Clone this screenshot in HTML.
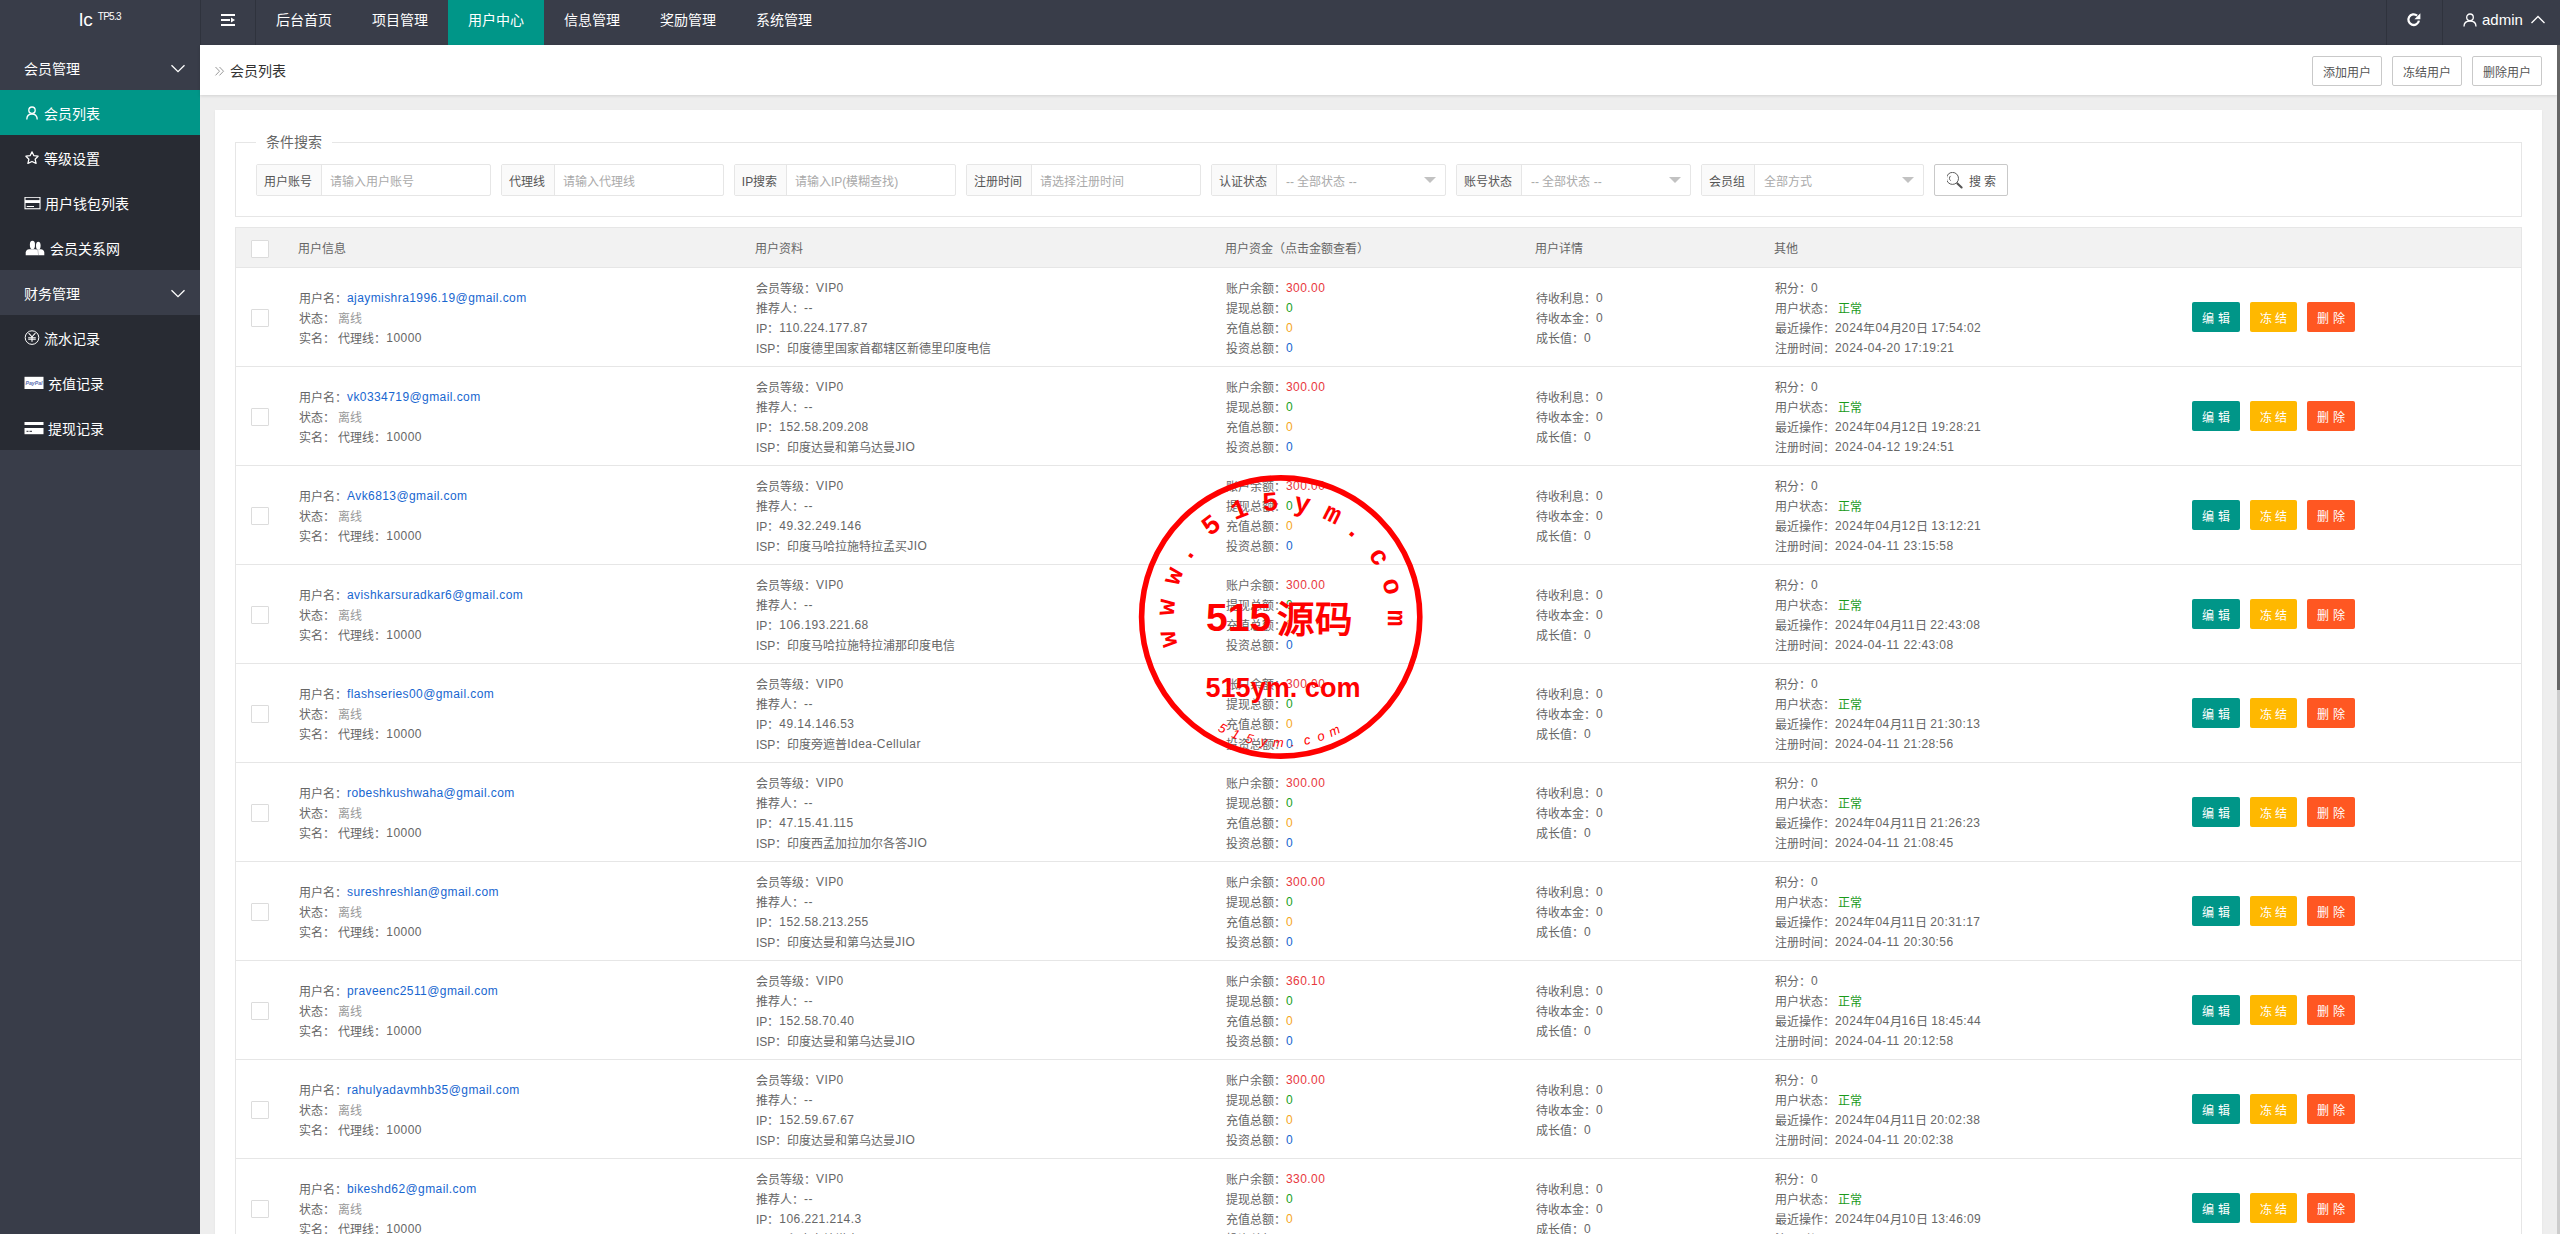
<!DOCTYPE html>
<html lang="zh-CN"><head><meta charset="utf-8"><title>会员列表</title>
<style>
*{margin:0;padding:0;box-sizing:border-box}
html,body{width:2560px;height:1234px;overflow:hidden;background:#eee;font-family:"Liberation Sans",sans-serif;font-size:12px;color:#666}
.abs{position:absolute}
.hdr{position:absolute;left:0;top:0;width:2560px;height:45px;background:#393D49}
.logo{position:absolute;left:79px;top:5px;color:#fff;font-size:19px;line-height:30px}
.logo sup{font-size:10px;position:relative;top:-6px;left:5px;vertical-align:baseline;letter-spacing:-0.7px}
.sep{position:absolute;top:0;width:1px;height:45px;background:#2f333d}
.nav{position:absolute;top:0;height:45px;line-height:40px;color:#fff;font-size:14px;text-align:center;width:96px}
.nav.on{background:#009688}
.side{position:absolute;left:0;top:45px;width:200px;height:1189px;background:#393D49}
.si{position:absolute;left:0;width:200px;height:45px;color:#fff;font-size:14px;line-height:48px}
.child{position:absolute;left:0;width:200px;background:#282B33}
.si.on{background:#009688}
.si .t{position:absolute;top:0}
.si svg{position:absolute}
.crumb{position:absolute;left:200px;top:45px;width:2357px;height:50px;background:#fff;box-shadow:0 1px 3px rgba(0,0,0,.12)}
.tb{position:absolute;top:11px;width:70px;height:30px;border:1px solid #c9c9c9;border-radius:2px;line-height:32px;text-align:center;color:#555;font-size:12px;background:#fff}
.card{position:absolute;left:215px;top:110px;width:2327px;height:1124px;background:#fff;box-shadow:0 1px 2px rgba(0,0,0,.06)}
.fs{position:absolute;left:235px;top:142px;width:2287px;height:75px;border:1px solid #e6e6e6}
.legend{position:absolute;left:266px;top:132px;background:#fff;font-size:14px;color:#666;line-height:20px;padding:0 0 0 0}
.ig{position:absolute;top:164px;height:32px;border:1px solid #e6e6e6;border-radius:2px;background:#fff}
.ig .lb{position:absolute;left:0;top:0;height:30px;line-height:34px;padding-right:2px;background:#fafafa;border-right:1px solid #e6e6e6;color:#555;font-size:12px;text-align:center}
.ig .ph{position:absolute;top:0;height:30px;line-height:34px;color:#aaa;font-size:12px}
.ig .arr{position:absolute;top:12px;width:0;height:0;border-left:6px solid transparent;border-right:6px solid transparent;border-top:6px solid #c2c2c2}
.sbtn{position:absolute;left:1934px;top:164px;width:74px;height:32px;border:1px solid #c9c9c9;border-radius:2px;background:#fff;color:#555;font-size:12px;line-height:30px}
.tbl{position:absolute;left:235px;top:0;width:2287px;height:1234px}
.thead{position:absolute;left:0;top:227px;width:2287px;height:41px;background:#f2f2f2;border:1px solid #e6e6e6;border-bottom:1px solid #e6e6e6}
.thead span{position:absolute;top:2px;line-height:39px;color:#666;font-size:12px}
.cb{position:absolute;width:18px;height:18px;border:1px solid #dcdcdc;background:#fff;border-radius:1px}
.row{position:absolute;left:0;width:2287px;height:99px;border-left:1px solid #e6e6e6;border-right:1px solid #e6e6e6;border-bottom:1px solid #e6e6e6;background:#fff}
.row>div.c1,.row>div.c2,.row>div.c3,.row>div.c4,.row>div.c5{position:absolute;top:0;height:98px;display:flex;flex-direction:column;justify-content:center;line-height:20px;padding-top:4px;white-space:nowrap;color:#666}
.c1{left:63px}.c2{left:520px}.c3{left:990px}.c4{left:1300px}.c5{left:1539px}
.blue{color:#1766d0}.gray{color:#999}.red{color:#e8383d}.green{color:#1aa01a}.orange{color:#f5a623}.lblue{color:#1766d0}.green2{color:#1a9a1a}
.btns{position:absolute;left:1956px;top:34px;height:30px;white-space:nowrap}
.bt{display:inline-block;position:absolute;top:0;width:48px;height:30px;line-height:30px;text-align:center;color:#fff;font-size:12px;border-radius:2px;line-height:34px}
.b1{left:0;background:#009688}.b2{left:58px;width:47px;background:#FFB800}.b3{left:115px;background:#FF5722}
.sb{position:absolute;left:2557px;top:45px;width:3px;height:1189px;background:#cdcdcd}
.sbt{position:absolute;left:2557px;top:45px;width:3px;height:645px;background:#666}

.l{letter-spacing:0.42px;position:relative;top:-1px}

</style></head><body>
<div class="hdr">
<div class="logo">lc<sup>TP5.3</sup></div>
<div class="sep" style="left:200px"></div>
<div class="sep" style="left:255px"></div>
<svg class="abs" style="left:220px;top:13px" width="17" height="14" viewBox="0 0 17 14"><rect x="1" y="1" width="14" height="2" fill="#fff"/><rect x="1" y="6" width="9" height="2" fill="#fff"/><path d="M11 4.5 L15 7 L11 9.5Z" fill="#fff"/><rect x="1" y="11" width="14" height="2" fill="#fff"/></svg>
<div class="nav" style="left:256px">后台首页</div>
<div class="nav" style="left:352px">项目管理</div>
<div class="nav on" style="left:448px">用户中心</div>
<div class="nav" style="left:544px">信息管理</div>
<div class="nav" style="left:640px">奖励管理</div>
<div class="nav" style="left:736px">系统管理</div>
<div class="sep" style="left:2386px"></div>
<div class="sep" style="left:2442px"></div>
<svg class="abs" style="left:2406px;top:12px" width="16" height="16" viewBox="0 0 16 16"><path d="M12.9 8.6 A5.3 5.3 0 1 1 11.1 3.6" fill="none" stroke="#fff" stroke-width="2.3"/><path d="M14.4 1.3 L14.4 7.3 L8.4 7.3Z" fill="#fff"/></svg>
<svg class="abs" style="left:2463px;top:13px" width="14" height="14" viewBox="0 0 14 14"><circle cx="7" cy="4.3" r="3.3" fill="none" stroke="#fff" stroke-width="1.3"/><path d="M1 13.5 C1 9.5 3.5 8 7 8 C10.5 8 13 9.5 13 13.5" fill="none" stroke="#fff" stroke-width="1.3"/></svg>
<div class="abs" style="left:2482px;top:0;line-height:40px;font-size:15px;color:#fff">admin</div>
<svg class="abs" style="left:2530px;top:15px" width="16" height="9" viewBox="0 0 16 9"><path d="M1.5 8 L8 1.5 L14.5 8" fill="none" stroke="#fff" stroke-width="1.3"/></svg>
</div>

<div class="side">
<div class="si" style="top:0"><span class="t" style="left:24px">会员管理</span><svg style="left:170px;top:18px" width="16" height="10" viewBox="0 0 16 10"><path d="M1.5 2.2 L8 8.6 L14.5 2.2" fill="none" stroke="#fff" stroke-width="1.3"/></svg></div>
<div class="child" style="top:45px;height:180px"></div>
<div class="si on" style="top:45px"><svg style="left:26px;top:16px" width="12" height="14" viewBox="0 0 12 14"><circle cx="6" cy="4.2" r="3.2" fill="none" stroke="#fff" stroke-width="1.3"/><path d="M0.8 13.6 C0.8 9.6 3 8 6 8 C9 8 11.2 9.6 11.2 13.6" fill="none" stroke="#fff" stroke-width="1.3"/></svg><span class="t" style="left:44px">会员列表</span></div>
<div class="si" style="top:90px"><svg style="left:25px;top:16px" width="15" height="14" viewBox="0 0 15 14"><path d="M7 0.9 L8.9 4.7 L13.1 5.2 L10.1 8.2 L11.1 12.4 L7 10.5 L2.9 12.4 L3.9 8.2 L0.9 5.2 L5.1 4.7Z" fill="none" stroke="#fff" stroke-width="1.25" stroke-linejoin="round"/></svg><span class="t" style="left:44px">等级设置</span></div>
<div class="si" style="top:135px"><svg style="left:24px;top:17px" width="18" height="14" viewBox="0 0 18 14"><rect x="1" y="0.25" width="15" height="11.5" fill="none" stroke="#fff" stroke-width="1.1"/><rect x="1" y="3.1" width="15" height="2.9" fill="#fff"/><rect x="2.7" y="9" width="7.3" height="1" fill="#fff"/></svg><span class="t" style="left:45px">用户钱包列表</span></div>
<div class="si" style="top:180px"><svg style="left:25px;top:15px" width="20" height="16" viewBox="0 0 20 16"><ellipse cx="7.45" cy="5.05" rx="2.6" ry="4.2" fill="#fff"/><ellipse cx="13.3" cy="5.75" rx="2.3" ry="3.9" fill="#fff"/><path d="M0.7 15.2 L0.7 12.6 Q0.9 9.6 4.2 9.2 L15.8 9.2 Q19.1 9.6 19.3 12.6 L19.3 15.2Z" fill="#fff"/><path d="M10.2 4.5 L10.6 9.2 L12.8 9.8 L13.6 15.2" fill="none" stroke="#282B33" stroke-width="0.5" opacity="0.5"/></svg><span class="t" style="left:50px">会员关系网</span></div>
<div class="si" style="top:225px"><span class="t" style="left:24px">财务管理</span><svg style="left:170px;top:18px" width="16" height="10" viewBox="0 0 16 10"><path d="M1.5 2.2 L8 8.6 L14.5 2.2" fill="none" stroke="#fff" stroke-width="1.3"/></svg></div>
<div class="child" style="top:270px;height:135px"></div>
<div class="si" style="top:270px"><svg style="left:24px;top:14px" width="16" height="16" viewBox="0 0 16 16"><circle cx="8" cy="8.6" r="6.8" fill="none" stroke="#fff" stroke-width="1"/><path d="M4.6 4.2 L8 7.8 L11.4 4.2 M8 7.8 L8 12.8 M4.2 8.7 L11.8 8.7 M4.2 10.3 L11.8 10.3" fill="none" stroke="#fff" stroke-width="1.1"/></svg><span class="t" style="left:44px">流水记录</span></div>
<div class="si" style="top:315px"><svg style="left:24px;top:16px" width="21" height="14" viewBox="0 0 21 14"><rect x="0.5" y="0.8" width="19" height="12.2" fill="#fff"/><text x="10" y="8.6" font-size="5.2" text-anchor="middle" fill="#5a6fb0" font-style="italic" font-weight="bold" font-family="Liberation Sans">PayPal</text></svg><span class="t" style="left:48px">充值记录</span></div>
<div class="si" style="top:360px"><svg style="left:24px;top:16px" width="21" height="14" viewBox="0 0 21 14"><rect x="0.5" y="1" width="19" height="3" fill="#fff"/><rect x="0.5" y="7" width="19" height="6.2" fill="#fff"/><rect x="2.5" y="9.8" width="2" height="1" fill="#282B33"/><rect x="5.5" y="9.8" width="2.5" height="1" fill="#282B33"/></svg><span class="t" style="left:48px">提现记录</span></div>
</div>

<div class="crumb">
<svg class="abs" style="left:14px;top:21px" width="12" height="11" viewBox="0 0 12 11"><path d="M1.5 1 L5.5 5.2 L1.5 9.4 M5.5 1 L9.5 5.2 L5.5 9.4" fill="none" stroke="#999" stroke-width="1"/></svg><div class="abs" style="left:30px;top:0;line-height:52px;font-size:14px;color:#333">会员列表</div>
<div class="tb" style="left:2112px">添加用户</div>
<div class="tb" style="left:2192px">冻结用户</div>
<div class="tb" style="left:2272px">删除用户</div>
</div>

<div class="card"></div>
<div class="fs"></div>
<div class="legend" style="padding:0 10px;left:256px">条件搜索</div>

<div class="ig" style="left:256px;width:235px"><div class="lb" style="width:65px">用户账号</div><div class="ph" style="left:73px">请输入用户账号</div></div>
<div class="ig" style="left:501px;width:223px"><div class="lb" style="width:53px">代理线</div><div class="ph" style="left:61px">请输入代理线</div></div>
<div class="ig" style="left:734px;width:222px"><div class="lb" style="width:52px">IP搜索</div><div class="ph" style="left:60px">请输入IP(模糊查找)</div></div>
<div class="ig" style="left:966px;width:235px"><div class="lb" style="width:65px">注册时间</div><div class="ph" style="left:73px">请选择注册时间</div></div>
<div class="ig" style="left:1211px;width:235px"><div class="lb" style="width:65px">认证状态</div><div class="ph" style="left:74px">-- 全部状态 --</div><div class="arr" style="left:212px"></div></div>
<div class="ig" style="left:1456px;width:235px"><div class="lb" style="width:65px">账号状态</div><div class="ph" style="left:74px">-- 全部状态 --</div><div class="arr" style="left:212px"></div></div>
<div class="ig" style="left:1701px;width:223px"><div class="lb" style="width:53px">会员组</div><div class="ph" style="left:62px">全部方式</div><div class="arr" style="left:200px"></div></div>
<div class="sbtn"><svg class="abs" style="left:12px;top:7px" width="17" height="18" viewBox="0 0 17 18"><circle cx="5.5" cy="6.4" r="6" fill="none" stroke="#555" stroke-width="0.95"/><path d="M10.4 11.4 L14.6 15.5" stroke="#555" stroke-width="2.1" stroke-linecap="round"/><path d="M3.7 3.9 A2.9 2.9 0 0 0 3.7 8.7" fill="none" stroke="#555" stroke-width="0.9"/></svg><span class="abs" style="left:34px;top:2px">搜 索</span></div>

<div class="sb"></div><div class="sbt"></div>

<div class="tbl">
<div class="thead"><div class="cb" style="left:15px;top:12px"></div><span style="left:62px">用户信息</span><span style="left:519px">用户资料</span><span style="left:989px">用户资金（点击金额查看）</span><span style="left:1299px">用户详情</span><span style="left:1538px">其他</span></div>
<div class="row" style="top:268px">
<div class="cb" style="left:15px;top:41px"></div>
<div class="c1"><div>用户名：<span class="blue"><span class="l">ajaymishra1996.19@gmail.com</span></span></div><div>状态：&nbsp;<span class="gray">离线</span></div><div>实名：&nbsp;代理线：<span class="l">10000</span></div></div>
<div class="c2"><div>会员等级：<span class="l">VIP0</span></div><div>推荐人：<span class="l">--</span></div><div>IP：<span class="l">110.224.177.87</span></div><div>ISP：印度德里国家首都辖区新德里印度电信</div></div>
<div class="c3"><div>账户余额：<span class="red"><span class="l">300.00</span></span></div><div>提现总额：<span class="green l">0</span></div><div>充值总额：<span class="orange l">0</span></div><div>投资总额：<span class="lblue l">0</span></div></div>
<div class="c4"><div>待收利息：<span class="l">0</span></div><div>待收本金：<span class="l">0</span></div><div>成长值：<span class="l">0</span></div></div>
<div class="c5"><div>积分：<span class="l">0</span></div><div>用户状态：&nbsp;<span class="green2">正常</span></div><div>最近操作：<span class="l">2024</span>年<span class="l">04</span>月<span class="l">20</span>日 <span class="l">17:54:02</span></div><div>注册时间：<span class="l">2024-04-20 17:19:21</span></div></div>
<div class="btns"><span class="bt b1">编 辑</span><span class="bt b2">冻 结</span><span class="bt b3">删 除</span></div>
</div><div class="row" style="top:367px">
<div class="cb" style="left:15px;top:41px"></div>
<div class="c1"><div>用户名：<span class="blue"><span class="l">vk0334719@gmail.com</span></span></div><div>状态：&nbsp;<span class="gray">离线</span></div><div>实名：&nbsp;代理线：<span class="l">10000</span></div></div>
<div class="c2"><div>会员等级：<span class="l">VIP0</span></div><div>推荐人：<span class="l">--</span></div><div>IP：<span class="l">152.58.209.208</span></div><div>ISP：印度达曼和第乌达曼<span class="l">JIO</span></div></div>
<div class="c3"><div>账户余额：<span class="red"><span class="l">300.00</span></span></div><div>提现总额：<span class="green l">0</span></div><div>充值总额：<span class="orange l">0</span></div><div>投资总额：<span class="lblue l">0</span></div></div>
<div class="c4"><div>待收利息：<span class="l">0</span></div><div>待收本金：<span class="l">0</span></div><div>成长值：<span class="l">0</span></div></div>
<div class="c5"><div>积分：<span class="l">0</span></div><div>用户状态：&nbsp;<span class="green2">正常</span></div><div>最近操作：<span class="l">2024</span>年<span class="l">04</span>月<span class="l">12</span>日 <span class="l">19:28:21</span></div><div>注册时间：<span class="l">2024-04-12 19:24:51</span></div></div>
<div class="btns"><span class="bt b1">编 辑</span><span class="bt b2">冻 结</span><span class="bt b3">删 除</span></div>
</div><div class="row" style="top:466px">
<div class="cb" style="left:15px;top:41px"></div>
<div class="c1"><div>用户名：<span class="blue"><span class="l">Avk6813@gmail.com</span></span></div><div>状态：&nbsp;<span class="gray">离线</span></div><div>实名：&nbsp;代理线：<span class="l">10000</span></div></div>
<div class="c2"><div>会员等级：<span class="l">VIP0</span></div><div>推荐人：<span class="l">--</span></div><div>IP：<span class="l">49.32.249.146</span></div><div>ISP：印度马哈拉施特拉孟买<span class="l">JIO</span></div></div>
<div class="c3"><div>账户余额：<span class="red"><span class="l">300.00</span></span></div><div>提现总额：<span class="green l">0</span></div><div>充值总额：<span class="orange l">0</span></div><div>投资总额：<span class="lblue l">0</span></div></div>
<div class="c4"><div>待收利息：<span class="l">0</span></div><div>待收本金：<span class="l">0</span></div><div>成长值：<span class="l">0</span></div></div>
<div class="c5"><div>积分：<span class="l">0</span></div><div>用户状态：&nbsp;<span class="green2">正常</span></div><div>最近操作：<span class="l">2024</span>年<span class="l">04</span>月<span class="l">12</span>日 <span class="l">13:12:21</span></div><div>注册时间：<span class="l">2024-04-11 23:15:58</span></div></div>
<div class="btns"><span class="bt b1">编 辑</span><span class="bt b2">冻 结</span><span class="bt b3">删 除</span></div>
</div><div class="row" style="top:565px">
<div class="cb" style="left:15px;top:41px"></div>
<div class="c1"><div>用户名：<span class="blue"><span class="l">avishkarsuradkar6@gmail.com</span></span></div><div>状态：&nbsp;<span class="gray">离线</span></div><div>实名：&nbsp;代理线：<span class="l">10000</span></div></div>
<div class="c2"><div>会员等级：<span class="l">VIP0</span></div><div>推荐人：<span class="l">--</span></div><div>IP：<span class="l">106.193.221.68</span></div><div>ISP：印度马哈拉施特拉浦那印度电信</div></div>
<div class="c3"><div>账户余额：<span class="red"><span class="l">300.00</span></span></div><div>提现总额：<span class="green l">0</span></div><div>充值总额：<span class="orange l">0</span></div><div>投资总额：<span class="lblue l">0</span></div></div>
<div class="c4"><div>待收利息：<span class="l">0</span></div><div>待收本金：<span class="l">0</span></div><div>成长值：<span class="l">0</span></div></div>
<div class="c5"><div>积分：<span class="l">0</span></div><div>用户状态：&nbsp;<span class="green2">正常</span></div><div>最近操作：<span class="l">2024</span>年<span class="l">04</span>月<span class="l">11</span>日 <span class="l">22:43:08</span></div><div>注册时间：<span class="l">2024-04-11 22:43:08</span></div></div>
<div class="btns"><span class="bt b1">编 辑</span><span class="bt b2">冻 结</span><span class="bt b3">删 除</span></div>
</div><div class="row" style="top:664px">
<div class="cb" style="left:15px;top:41px"></div>
<div class="c1"><div>用户名：<span class="blue"><span class="l">flashseries00@gmail.com</span></span></div><div>状态：&nbsp;<span class="gray">离线</span></div><div>实名：&nbsp;代理线：<span class="l">10000</span></div></div>
<div class="c2"><div>会员等级：<span class="l">VIP0</span></div><div>推荐人：<span class="l">--</span></div><div>IP：<span class="l">49.14.146.53</span></div><div>ISP：印度旁遮普<span class="l">Idea-Cellular</span></div></div>
<div class="c3"><div>账户余额：<span class="red"><span class="l">300.00</span></span></div><div>提现总额：<span class="green l">0</span></div><div>充值总额：<span class="orange l">0</span></div><div>投资总额：<span class="lblue l">0</span></div></div>
<div class="c4"><div>待收利息：<span class="l">0</span></div><div>待收本金：<span class="l">0</span></div><div>成长值：<span class="l">0</span></div></div>
<div class="c5"><div>积分：<span class="l">0</span></div><div>用户状态：&nbsp;<span class="green2">正常</span></div><div>最近操作：<span class="l">2024</span>年<span class="l">04</span>月<span class="l">11</span>日 <span class="l">21:30:13</span></div><div>注册时间：<span class="l">2024-04-11 21:28:56</span></div></div>
<div class="btns"><span class="bt b1">编 辑</span><span class="bt b2">冻 结</span><span class="bt b3">删 除</span></div>
</div><div class="row" style="top:763px">
<div class="cb" style="left:15px;top:41px"></div>
<div class="c1"><div>用户名：<span class="blue"><span class="l">robeshkushwaha@gmail.com</span></span></div><div>状态：&nbsp;<span class="gray">离线</span></div><div>实名：&nbsp;代理线：<span class="l">10000</span></div></div>
<div class="c2"><div>会员等级：<span class="l">VIP0</span></div><div>推荐人：<span class="l">--</span></div><div>IP：<span class="l">47.15.41.115</span></div><div>ISP：印度西孟加拉加尔各答<span class="l">JIO</span></div></div>
<div class="c3"><div>账户余额：<span class="red"><span class="l">300.00</span></span></div><div>提现总额：<span class="green l">0</span></div><div>充值总额：<span class="orange l">0</span></div><div>投资总额：<span class="lblue l">0</span></div></div>
<div class="c4"><div>待收利息：<span class="l">0</span></div><div>待收本金：<span class="l">0</span></div><div>成长值：<span class="l">0</span></div></div>
<div class="c5"><div>积分：<span class="l">0</span></div><div>用户状态：&nbsp;<span class="green2">正常</span></div><div>最近操作：<span class="l">2024</span>年<span class="l">04</span>月<span class="l">11</span>日 <span class="l">21:26:23</span></div><div>注册时间：<span class="l">2024-04-11 21:08:45</span></div></div>
<div class="btns"><span class="bt b1">编 辑</span><span class="bt b2">冻 结</span><span class="bt b3">删 除</span></div>
</div><div class="row" style="top:862px">
<div class="cb" style="left:15px;top:41px"></div>
<div class="c1"><div>用户名：<span class="blue"><span class="l">sureshreshlan@gmail.com</span></span></div><div>状态：&nbsp;<span class="gray">离线</span></div><div>实名：&nbsp;代理线：<span class="l">10000</span></div></div>
<div class="c2"><div>会员等级：<span class="l">VIP0</span></div><div>推荐人：<span class="l">--</span></div><div>IP：<span class="l">152.58.213.255</span></div><div>ISP：印度达曼和第乌达曼<span class="l">JIO</span></div></div>
<div class="c3"><div>账户余额：<span class="red"><span class="l">300.00</span></span></div><div>提现总额：<span class="green l">0</span></div><div>充值总额：<span class="orange l">0</span></div><div>投资总额：<span class="lblue l">0</span></div></div>
<div class="c4"><div>待收利息：<span class="l">0</span></div><div>待收本金：<span class="l">0</span></div><div>成长值：<span class="l">0</span></div></div>
<div class="c5"><div>积分：<span class="l">0</span></div><div>用户状态：&nbsp;<span class="green2">正常</span></div><div>最近操作：<span class="l">2024</span>年<span class="l">04</span>月<span class="l">11</span>日 <span class="l">20:31:17</span></div><div>注册时间：<span class="l">2024-04-11 20:30:56</span></div></div>
<div class="btns"><span class="bt b1">编 辑</span><span class="bt b2">冻 结</span><span class="bt b3">删 除</span></div>
</div><div class="row" style="top:961px">
<div class="cb" style="left:15px;top:41px"></div>
<div class="c1"><div>用户名：<span class="blue"><span class="l">praveenc2511@gmail.com</span></span></div><div>状态：&nbsp;<span class="gray">离线</span></div><div>实名：&nbsp;代理线：<span class="l">10000</span></div></div>
<div class="c2"><div>会员等级：<span class="l">VIP0</span></div><div>推荐人：<span class="l">--</span></div><div>IP：<span class="l">152.58.70.40</span></div><div>ISP：印度达曼和第乌达曼<span class="l">JIO</span></div></div>
<div class="c3"><div>账户余额：<span class="red"><span class="l">360.10</span></span></div><div>提现总额：<span class="green l">0</span></div><div>充值总额：<span class="orange l">0</span></div><div>投资总额：<span class="lblue l">0</span></div></div>
<div class="c4"><div>待收利息：<span class="l">0</span></div><div>待收本金：<span class="l">0</span></div><div>成长值：<span class="l">0</span></div></div>
<div class="c5"><div>积分：<span class="l">0</span></div><div>用户状态：&nbsp;<span class="green2">正常</span></div><div>最近操作：<span class="l">2024</span>年<span class="l">04</span>月<span class="l">16</span>日 <span class="l">18:45:44</span></div><div>注册时间：<span class="l">2024-04-11 20:12:58</span></div></div>
<div class="btns"><span class="bt b1">编 辑</span><span class="bt b2">冻 结</span><span class="bt b3">删 除</span></div>
</div><div class="row" style="top:1060px">
<div class="cb" style="left:15px;top:41px"></div>
<div class="c1"><div>用户名：<span class="blue"><span class="l">rahulyadavmhb35@gmail.com</span></span></div><div>状态：&nbsp;<span class="gray">离线</span></div><div>实名：&nbsp;代理线：<span class="l">10000</span></div></div>
<div class="c2"><div>会员等级：<span class="l">VIP0</span></div><div>推荐人：<span class="l">--</span></div><div>IP：<span class="l">152.59.67.67</span></div><div>ISP：印度达曼和第乌达曼<span class="l">JIO</span></div></div>
<div class="c3"><div>账户余额：<span class="red"><span class="l">300.00</span></span></div><div>提现总额：<span class="green l">0</span></div><div>充值总额：<span class="orange l">0</span></div><div>投资总额：<span class="lblue l">0</span></div></div>
<div class="c4"><div>待收利息：<span class="l">0</span></div><div>待收本金：<span class="l">0</span></div><div>成长值：<span class="l">0</span></div></div>
<div class="c5"><div>积分：<span class="l">0</span></div><div>用户状态：&nbsp;<span class="green2">正常</span></div><div>最近操作：<span class="l">2024</span>年<span class="l">04</span>月<span class="l">11</span>日 <span class="l">20:02:38</span></div><div>注册时间：<span class="l">2024-04-11 20:02:38</span></div></div>
<div class="btns"><span class="bt b1">编 辑</span><span class="bt b2">冻 结</span><span class="bt b3">删 除</span></div>
</div><div class="row" style="top:1159px">
<div class="cb" style="left:15px;top:41px"></div>
<div class="c1"><div>用户名：<span class="blue"><span class="l">bikeshd62@gmail.com</span></span></div><div>状态：&nbsp;<span class="gray">离线</span></div><div>实名：&nbsp;代理线：<span class="l">10000</span></div></div>
<div class="c2"><div>会员等级：<span class="l">VIP0</span></div><div>推荐人：<span class="l">--</span></div><div>IP：<span class="l">106.221.214.3</span></div><div>ISP：印度卡纳塔克</div></div>
<div class="c3"><div>账户余额：<span class="red"><span class="l">330.00</span></span></div><div>提现总额：<span class="green l">0</span></div><div>充值总额：<span class="orange l">0</span></div><div>投资总额：<span class="lblue l">0</span></div></div>
<div class="c4"><div>待收利息：<span class="l">0</span></div><div>待收本金：<span class="l">0</span></div><div>成长值：<span class="l">0</span></div></div>
<div class="c5"><div>积分：<span class="l">0</span></div><div>用户状态：&nbsp;<span class="green2">正常</span></div><div>最近操作：<span class="l">2024</span>年<span class="l">04</span>月<span class="l">10</span>日 <span class="l">13:46:09</span></div><div>注册时间：<span class="l">2024-04-10 13:40:11</span></div></div>
<div class="btns"><span class="bt b1">编 辑</span><span class="bt b2">冻 结</span><span class="bt b3">删 除</span></div>
</div>
</div>
<svg class="abs" style="left:1131px;top:467px" width="300" height="300" viewBox="0 0 300 300">
<circle cx="149.7" cy="150" r="139.1" fill="none" stroke="#f00" stroke-width="5.6"/>
<text transform="translate(45.00,170.60) rotate(258.90)" text-anchor="middle" font-size="27" font-weight="bold" fill="#f00" font-family="Liberation Mono">w</text>
<text transform="translate(43.39,140.92) rotate(274.87)" text-anchor="middle" font-size="27" font-weight="bold" fill="#f00" font-family="Liberation Mono">w</text>
<text transform="translate(50.00,111.93) rotate(290.84)" text-anchor="middle" font-size="27" font-weight="bold" fill="#f00" font-family="Liberation Mono">w</text>
<text transform="translate(61.50,89.86) rotate(304.20)" text-anchor="middle" font-size="27" font-weight="bold" fill="#f00" font-family="Liberation Mono">.</text>
<text transform="translate(85.28,64.79) rotate(322.78)" text-anchor="middle" font-size="27" font-weight="bold" fill="#f00" font-family="Liberation Mono">5</text>
<text transform="translate(111.22,50.28) rotate(338.75)" text-anchor="middle" font-size="27" font-weight="bold" fill="#f00" font-family="Liberation Mono">1</text>
<text transform="translate(140.15,43.45) rotate(354.72)" text-anchor="middle" font-size="27" font-weight="bold" fill="#f00" font-family="Liberation Mono">5</text>
<text transform="translate(169.85,44.86) rotate(370.69)" text-anchor="middle" font-size="27" font-weight="bold" fill="#f00" font-family="Liberation Mono">y</text>
<text transform="translate(198.01,54.38) rotate(386.66)" text-anchor="middle" font-size="27" font-weight="bold" fill="#f00" font-family="Liberation Mono">m</text>
<text transform="translate(219.49,68.64) rotate(400.50)" text-anchor="middle" font-size="27" font-weight="bold" fill="#f00" font-family="Liberation Mono">.</text>
<text transform="translate(241.33,94.25) rotate(418.60)" text-anchor="middle" font-size="27" font-weight="bold" fill="#f00" font-family="Liberation Mono">c</text>
<text transform="translate(253.14,121.53) rotate(434.57)" text-anchor="middle" font-size="27" font-weight="bold" fill="#f00" font-family="Liberation Mono">o</text>
<text transform="translate(257.00,151.01) rotate(450.54)" text-anchor="middle" font-size="27" font-weight="bold" fill="#f00" font-family="Liberation Mono">m</text>
<text transform="translate(89.57,265.10) rotate(27.70)" text-anchor="middle" font-size="13" font-style="italic" fill="#f00" font-family="Liberation Sans">5</text>
<text transform="translate(103.20,271.28) rotate(21.10)" text-anchor="middle" font-size="13" font-style="italic" fill="#f00" font-family="Liberation Sans">1</text>
<text transform="translate(117.45,275.86) rotate(14.50)" text-anchor="middle" font-size="13" font-style="italic" fill="#f00" font-family="Liberation Sans">5</text>
<text transform="translate(132.13,278.77) rotate(7.90)" text-anchor="middle" font-size="13" font-style="italic" fill="#f00" font-family="Liberation Sans">y</text>
<text transform="translate(147.05,279.97) rotate(1.30)" text-anchor="middle" font-size="13" font-style="italic" fill="#f00" font-family="Liberation Sans">m</text>
<text transform="translate(162.01,279.44) rotate(-5.30)" text-anchor="middle" font-size="13" font-style="italic" fill="#f00" font-family="Liberation Sans">.</text>
<text transform="translate(176.81,277.21) rotate(-11.90)" text-anchor="middle" font-size="13" font-style="italic" fill="#f00" font-family="Liberation Sans">c</text>
<text transform="translate(191.25,273.28) rotate(-18.50)" text-anchor="middle" font-size="13" font-style="italic" fill="#f00" font-family="Liberation Sans">o</text>
<text transform="translate(205.15,267.72) rotate(-25.10)" text-anchor="middle" font-size="13" font-style="italic" fill="#f00" font-family="Liberation Sans">m</text>
<text x="75" y="163.5" font-size="39" font-weight="bold" fill="#f00" font-family="Liberation Sans">515</text>
<text x="146" y="165.5" font-size="37" fill="#f00" font-family="Liberation Serif" font-weight="bold" textLength="75" lengthAdjust="spacingAndGlyphs">源码</text>
<text x="74.5" y="230.29999999999995" font-size="28" font-weight="bold" fill="#f00" font-family="Liberation Sans" textLength="155" lengthAdjust="spacingAndGlyphs">515ym. com</text>
</svg>
</body></html>
